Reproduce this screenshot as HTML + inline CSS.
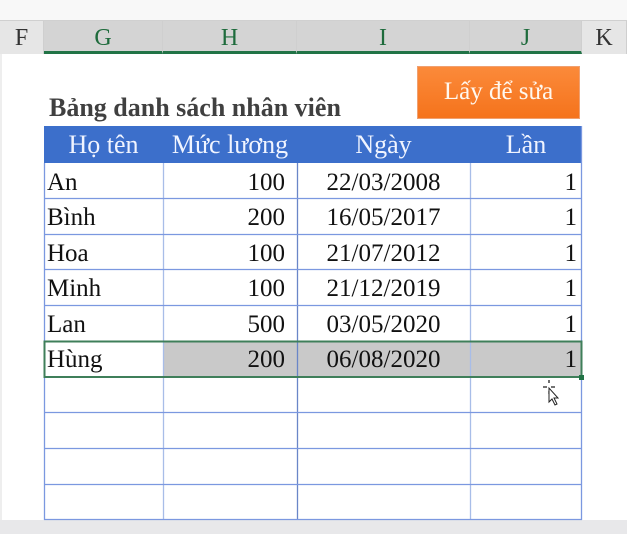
<!DOCTYPE html>
<html><head><meta charset="utf-8"><style>
*{margin:0;padding:0;box-sizing:border-box}
body{width:627px;height:534px;background:#fff;position:relative;overflow:hidden;font-family:"Liberation Serif","Times New Roman",serif}
.a{position:absolute}
.hd{top:20px;height:34px;background:#e6e6e6;border-right:1px solid #cfcfcf;border-top:1px solid #d0d0d0;font-size:24px;color:#333;text-align:center;line-height:34px}
.hs{background:#d4d4d4;color:#1e6b3c;border-bottom:3px solid #217346}
.c{position:absolute;font-size:25px;color:#111;line-height:35px;height:35px}
.th{color:#f0f4ff;font-size:26px;line-height:38px;position:absolute;top:126px}
</style></head><body>
<div class="a" style="left:0;top:0;width:627px;height:20px;background:#f8f8f8"></div>
<div class="a hd" style="left:0;width:44px">F</div>
<div class="a hd hs" style="left:44px;width:119px">G</div>
<div class="a hd hs" style="left:163px;width:134px">H</div>
<div class="a hd hs" style="left:297px;width:173px">I</div>
<div class="a hd hs" style="left:470px;width:112px">J</div>
<div class="a hd" style="left:582px;width:45px">K</div>
<div class="a" style="left:0;top:520px;width:627px;height:14px;background:#e8e8ea"></div>
<div class="a" style="left:0;top:54px;width:2px;height:466px;background:#eee"></div>

<div class="a" style="left:49px;top:93px;font-size:26px;line-height:30px;font-weight:bold;color:#404040">Bảng danh sách nhân viên</div>
<div class="a" style="left:417px;top:66px;width:163px;height:53px;background:linear-gradient(#fb8a3a,#f5731c);border:1px solid #f0a070;color:#fff8ef;font-size:25px;text-align:center;line-height:50px">Lấy để sửa</div>

<div class="a" style="left:44px;top:126px;width:538px;height:37px;background:#3c6fcb"></div>
<div class="th" style="left:44px;width:119px;text-align:center">Họ tên</div>
<div class="th" style="left:163px;width:134px;text-align:center">Mức lương</div>
<div class="th" style="left:297px;width:173px;text-align:center">Ngày</div>
<div class="th" style="left:470px;width:112px;text-align:center">Lần</div>

<svg class="a" style="left:0;top:0" width="627" height="534">
<rect x="163" y="341" width="419" height="36" fill="#c9c9c9"/>
<g stroke="#7b98e0" stroke-width="1.3">
<line x1="44.5" y1="163" x2="44.5" y2="520"/>
<line x1="163.5" y1="163" x2="163.5" y2="520" stroke="#a8bde8"/>
<line x1="297.5" y1="163" x2="297.5" y2="520" stroke="#6a86c8"/>
<line x1="470.5" y1="163" x2="470.5" y2="520" stroke="#a8bde8"/>
<line x1="581.5" y1="126" x2="581.5" y2="520"/>
<line x1="44" y1="198.5" x2="582" y2="198.5"/>
<line x1="44" y1="234.5" x2="582" y2="234.5"/>
<line x1="44" y1="269.5" x2="582" y2="269.5"/>
<line x1="44" y1="305.5" x2="582" y2="305.5"/>
<line x1="44" y1="412.5" x2="582" y2="412.5"/>
<line x1="44" y1="448.5" x2="582" y2="448.5"/>
<line x1="44" y1="484.5" x2="582" y2="484.5"/>
<line x1="44" y1="519.5" x2="582" y2="519.5"/>
</g>
<rect x="44.5" y="341.5" width="537" height="35.5" fill="none" stroke="#3f7f5a" stroke-width="2"/>
<rect x="579" y="375" width="5" height="5" fill="#217346"/>
<path d="M547 387l-4 0M551 387l4 0M549 383v-3M549 391v3" stroke="#222" stroke-width="1.3"/>
<path d="M549 388l0 14 3-3 3 6 2-1-3-6 4 0z" fill="#fff" stroke="#222" stroke-width="1"/>
</svg>

<div class="c" style="left:47px;top:165px">An</div>
<div class="c" style="left:47px;top:200px">Bình</div>
<div class="c" style="left:47px;top:236px">Hoa</div>
<div class="c" style="left:47px;top:271px">Minh</div>
<div class="c" style="left:47px;top:307px">Lan</div>
<div class="c" style="left:47px;top:342px">Hùng</div>

<div class="c" style="left:163px;width:122px;text-align:right;top:165px">100</div>
<div class="c" style="left:163px;width:122px;text-align:right;top:200px">200</div>
<div class="c" style="left:163px;width:122px;text-align:right;top:236px">100</div>
<div class="c" style="left:163px;width:122px;text-align:right;top:271px">100</div>
<div class="c" style="left:163px;width:122px;text-align:right;top:307px">500</div>
<div class="c" style="left:163px;width:122px;text-align:right;top:342px">200</div>

<div class="c" style="left:297px;width:173px;text-align:center;top:165px">22/03/2008</div>
<div class="c" style="left:297px;width:173px;text-align:center;top:200px">16/05/2017</div>
<div class="c" style="left:297px;width:173px;text-align:center;top:236px">21/07/2012</div>
<div class="c" style="left:297px;width:173px;text-align:center;top:271px">21/12/2019</div>
<div class="c" style="left:297px;width:173px;text-align:center;top:307px">03/05/2020</div>
<div class="c" style="left:297px;width:173px;text-align:center;top:342px">06/08/2020</div>

<div class="c" style="left:470px;width:107px;text-align:right;top:165px">1</div>
<div class="c" style="left:470px;width:107px;text-align:right;top:200px">1</div>
<div class="c" style="left:470px;width:107px;text-align:right;top:236px">1</div>
<div class="c" style="left:470px;width:107px;text-align:right;top:271px">1</div>
<div class="c" style="left:470px;width:107px;text-align:right;top:307px">1</div>
<div class="c" style="left:470px;width:107px;text-align:right;top:342px">1</div>
</body></html>
